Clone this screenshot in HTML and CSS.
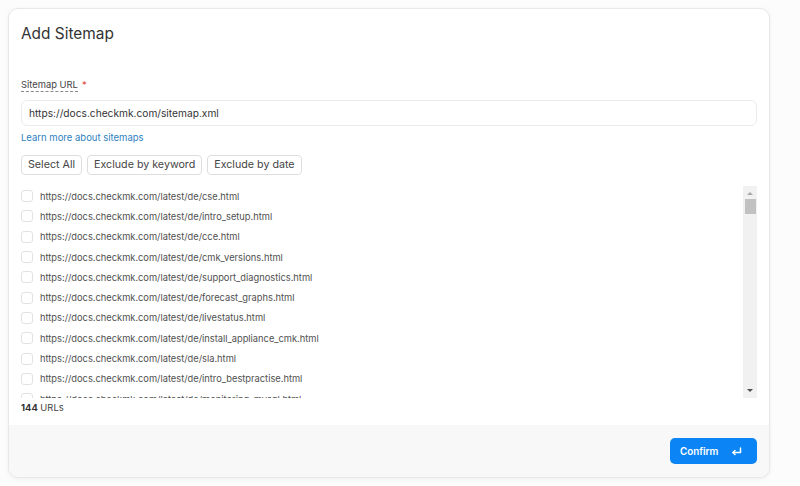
FILE: index.html
```html
<!DOCTYPE html>
<html>
<head>
<meta charset="utf-8">
<link rel="stylesheet" href="styles.css">
</head>
<body>
<div class="card">
  <div class="body">
    <h1 class="title">Add Sitemap</h1>
    <div class="field">
      <div class="label-row"><span class="label">Sitemap URL</span><span class="req">*</span></div>
      <div class="input">https://docs.checkmk.com/sitemap.xml</div>
      <a class="link">Learn more about sitemaps</a>
    </div>
    <div class="chips">
      <span class="chip">Select All</span>
      <span class="chip">Exclude by keyword</span>
      <span class="chip">Exclude by date</span>
    </div>
    <div class="listwrap">
      <div class="list">
        <div class="row"><span class="cb"></span><span>https://docs.checkmk.com/latest/de/cse.html</span></div>
        <div class="row"><span class="cb"></span><span>https://docs.checkmk.com/latest/de/intro_setup.html</span></div>
        <div class="row"><span class="cb"></span><span>https://docs.checkmk.com/latest/de/cce.html</span></div>
        <div class="row"><span class="cb"></span><span>https://docs.checkmk.com/latest/de/cmk_versions.html</span></div>
        <div class="row"><span class="cb"></span><span>https://docs.checkmk.com/latest/de/support_diagnostics.html</span></div>
        <div class="row"><span class="cb"></span><span>https://docs.checkmk.com/latest/de/forecast_graphs.html</span></div>
        <div class="row"><span class="cb"></span><span>https://docs.checkmk.com/latest/de/livestatus.html</span></div>
        <div class="row"><span class="cb"></span><span>https://docs.checkmk.com/latest/de/install_appliance_cmk.html</span></div>
        <div class="row"><span class="cb"></span><span>https://docs.checkmk.com/latest/de/sla.html</span></div>
        <div class="row"><span class="cb"></span><span>https://docs.checkmk.com/latest/de/intro_bestpractise.html</span></div>
        <div class="row"><span class="cb"></span><span>https://docs.checkmk.com/latest/de/monitoring_mysql.html</span></div>
      </div>
      <div class="scrollbar">
        <span class="arrow up"></span>
        <span class="thumb"></span>
        <span class="track-fill"></span>
        <span class="arrow down"></span>
      </div>
    </div>
    <div class="count"><b>144</b> URLs</div>
  </div>
  <div class="footer">
    <button class="confirm">Confirm
      <svg width="11" height="9" viewBox="0 0 11 9" fill="none" stroke="#fff" stroke-width="1.5" stroke-linecap="round" stroke-linejoin="round"><path d="M9.5 1v4.5H2"/><path d="M4 3.5L2 5.5l2 2"/></svg>
    </button>
  </div>
</div>
</body>
</html>
```
FILE: styles.css
```css
* { box-sizing: border-box; }
html, body { margin: 0; padding: 0; }
body {
  background: #fcfcfc;
  font-family: Inter, "Liberation Sans", sans-serif;
  color: #333;
  width: 800px;
  height: 486px;
  overflow: hidden;
}
.card {
  margin: 8px 0 0 8px;
  width: 762px;
  height: 470px;
  border: 1px solid #e8e8e8;
  border-radius: 10px;
  background: #fff;
  display: flex;
  flex-direction: column;
  overflow: hidden;
  box-shadow: 0 1px 4px rgba(0,0,0,0.06);
}
.body {
  flex: 1;
  padding: 13px 12px 0 12px;
  display: flex;
  flex-direction: column;
}
.title {
  margin: 0;
  font-size: 15.4px;
  line-height: 24px;
  font-weight: 400;
  color: #333;
}
.field {
  margin-top: 32px;
  display: flex;
  flex-direction: column;
}
.label-row {
  font-size: 9.4px;
  line-height: 14px;
  color: #444;
  display: flex;
  gap: 4px;
}
.label { border-bottom: 1px dashed #888; line-height: 13px; }
.req { color: #e0453a; }
.input {
  margin-top: 8px;
  height: 26px;
  border: 1px solid #ebebeb;
  border-radius: 6px;
  padding: 0 7px;
  font-size: 10.2px;
  line-height: 24px;
  color: #333;
}
.link {
  margin-top: 5px;
  font-size: 9.5px;
  line-height: 14px;
  color: #2f7fc1;
}
.chips {
  margin-top: 10px;
  display: flex;
  gap: 5px;
}
.chip {
  height: 20px;
  border: 1px solid #dedede;
  border-radius: 4px;
  padding: 0 6px;
  font-size: 10.7px;
  line-height: 18px;
  color: #444;
  background: #fff;
}
.listwrap {
  margin-top: 11px;
  height: 212px;
  display: flex;
}
.list {
  flex: 1;
  overflow: hidden;
}
.row {
  height: 20.3px;
  display: flex;
  align-items: center;
  gap: 7px;
  font-size: 9.3px;
  color: #505050;
}
.cb {
  width: 12px;
  height: 12px;
  border: 1px solid #e2e2e2;
  border-radius: 3px;
  flex: none;
}
.scrollbar {
  width: 14px;
  background: #f1f1f1;
  display: flex;
  flex-direction: column;
  align-items: center;
}
.arrow {
  width: 0; height: 0;
  border-left: 3.5px solid transparent;
  border-right: 3.5px solid transparent;
}
.arrow.up { margin-top: 6px; border-bottom: 3.5px solid #a8a8a8; }
.arrow.down { margin-bottom: 6px; border-top: 3.5px solid #505050; }
.thumb {
  margin-top: 4px;
  width: 11px;
  height: 15px;
  background: #c1c1c1;
}
.track-fill { flex: 1; }
.count {
  margin-top: 3px;
  font-size: 9.4px;
  line-height: 14px;
  color: #444;
}
.count b { color: #333; font-weight: 700; }
.footer {
  height: 52px;
  background: #f8f8f8;
  display: flex;
  justify-content: flex-end;
  align-items: center;
  padding-right: 12px;
}
.confirm {
  width: 87px;
  height: 26px;
  border: none;
  border-radius: 5px;
  background: #0b84f5;
  color: #fff;
  font-family: Inter, "Liberation Sans", sans-serif;
  font-size: 9.8px;
  font-weight: 600;
  display: flex;
  align-items: center;
  justify-content: space-between;
  padding: 0 15px 0 10px;
}
```
